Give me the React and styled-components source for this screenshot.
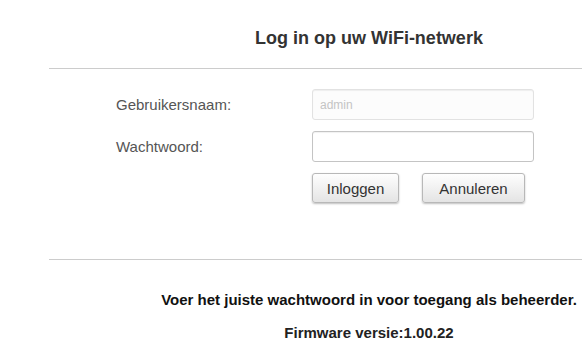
import styled, { createGlobalStyle } from "styled-components";

const GlobalStyle = createGlobalStyle`
  html, body {
    margin: 0;
    padding: 0;
    background: #fff;
    overflow: hidden;
  }
  body {
    font-family: "Liberation Sans", Arial, sans-serif;
  }
`;

const Frame = styled.div`
  width: 100vw;
  overflow: hidden;
`;

const Page = styled.div`
  width: 640px;
  margin-left: 49px;
`;

const Title = styled.h1`
  margin: 0;
  height: 69px;
  box-sizing: border-box;
  padding-top: 28px;
  text-align: center;
  font-size: 18px;
  font-weight: bold;
  color: #333;
  border-bottom: 1px solid #ccc;
`;

const Form = styled.form`
  display: flex;
  flex-direction: column;
  gap: 11px;
  padding: 20px 0 0 67px;
  height: 191px;
  box-sizing: border-box;
  border-bottom: 1px solid #ccc;
`;

const Row = styled.div`
  display: flex;
  align-items: center;
`;

const Label = styled.label`
  width: 196px;
  font-size: 15px;
  color: #555;
`;

const Input = styled.input`
  width: 222px;
  height: 31px;
  box-sizing: border-box;
  padding: 0 7px;
  font-family: inherit;
  font-size: 12px;
  border-radius: 3px;
  border: 1px solid ${(p) => (p.disabled ? "#e2e2e2" : "#c4c4c4")};
  background: ${(p) => (p.disabled ? "#fcfcfc" : "#fff")};
  box-shadow: inset 0 1px 1px rgba(0, 0, 0, 0.06);
  &::placeholder {
    color: #c4c4c4;
  }
`;

const Buttons = styled.div`
  display: flex;
  gap: 23px;
  padding-left: 196px;
`;

const Button = styled.button`
  height: 30px;
  width: ${(p) => p.$w}px;
  font-family: inherit;
  font-size: 15px;
  color: #333;
  border: 1px solid #b8b8b8;
  border-radius: 3px;
  background: linear-gradient(#fefefe, #e4e4e4);
  box-shadow: 0 1px 2px rgba(0, 0, 0, 0.25);
  cursor: pointer;
`;

const Note = styled.p`
  margin: 31px 0 0;
  text-align: center;
  font-size: 15px;
  font-weight: bold;
  color: #111;
`;

const Firmware = styled.p`
  margin: 16px 0 0;
  text-align: center;
  font-size: 15px;
  font-weight: bold;
  color: #222;
`;

export default function App() {
  return (
    <Frame>
      <GlobalStyle />
      <Page>
        <Title>Log in op uw WiFi-netwerk</Title>
        <Form onSubmit={(e) => e.preventDefault()}>
          <Row>
            <Label>Gebruikersnaam:</Label>
            <Input type="text" placeholder="admin" disabled />
          </Row>
          <Row>
            <Label>Wachtwoord:</Label>
            <Input type="password" />
          </Row>
          <Buttons>
            <Button $w={87}>Inloggen</Button>
            <Button type="button" $w={103}>Annuleren</Button>
          </Buttons>
        </Form>
        <Note>Voer het juiste wachtwoord in voor toegang als beheerder.</Note>
        <Firmware>Firmware versie:1.00.22</Firmware>
      </Page>
    </Frame>
  );
}
